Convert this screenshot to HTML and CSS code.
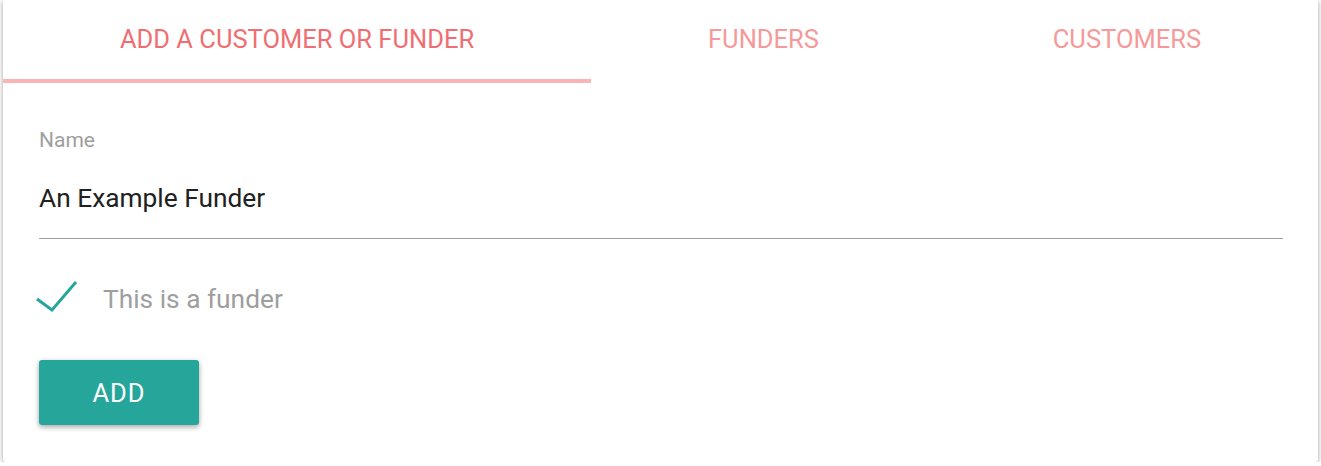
FILE: index.html
```html
<!DOCTYPE html>
<html>
<head>
<meta charset="utf-8">
<link rel="stylesheet" href="styles.css">
</head>
<body>
<div class="card">
  <div class="tabs">
    <div class="tab active">ADD A CUSTOMER OR FUNDER</div>
    <div class="tab">FUNDERS</div>
    <div class="tab">CUSTOMERS</div>
  </div>
  <div class="form">
    <div class="field">
      <div class="label">Name</div>
      <div class="value">An Example Funder</div>
    </div>
    <div class="check-row">
      <svg class="check" width="44" height="36" viewBox="0 0 44 36"><polyline points="3,20 18,31 42,3" fill="none" stroke="#26a69a" stroke-width="3"/></svg>
      <span class="check-label">This is a funder</span>
    </div>
    <button class="btn">ADD</button>
  </div>
</div>
</body>
</html>
```
FILE: styles.css
```css
html, body { margin: 0; padding: 0; background: #fff; }
body { font-family: Roboto, "Noto Sans", sans-serif; }
.card {
  margin: 0 3px;
  height: 462px;
  background: #fff;
  border-radius: 0 0 3px 3px;
  box-shadow: 0 1px 6px rgba(0,0,0,0.2), 0 1px 4px rgba(0,0,0,0.2);
  overflow: hidden;
}
.tabs { display: flex; height: 83px; }
.tab {
  flex: 1 1 auto;
  display: flex;
  align-items: center;
  justify-content: center;
  padding-bottom: 2px;
  box-sizing: border-box;
  font-size: 25.5px;
  color: #f5999a;
  border-bottom: 4px solid transparent;
}
.tab.active { color: #f06e72; border-bottom-color: #fbb4b5; }
.form { padding: 0 35px 0 36px; }
.field { margin-top: 46px; border-bottom: 1px solid #9e9e9e; height: 111px; box-sizing: border-box; }
.label { font-size: 21px; color: #9e9e9e; line-height: 24px; margin-top: -1px; }
.value { font-size: 26.3px; color: #212121; margin-top: 30px; line-height: 32px; }
.check-row { display: flex; align-items: center; height: 40px; margin-top: 40px; }
.check { margin-left: -5px; margin-top: -4px; }
.check-label { margin-left: 25px; font-size: 26.3px; color: #9e9e9e; }
.btn {
  display: block;
  margin-top: 41px;
  margin-left: 0;
  width: 160px;
  height: 65px;
  border: none;
  border-radius: 3px;
  background: #26a69a;
  color: #fff;
  font-family: Roboto, sans-serif;
  font-size: 25.5px;
  letter-spacing: 1px;
  box-shadow: 0 2px 5px rgba(0,0,0,0.26), 0 2px 6px rgba(0,0,0,0.12);
}
```
